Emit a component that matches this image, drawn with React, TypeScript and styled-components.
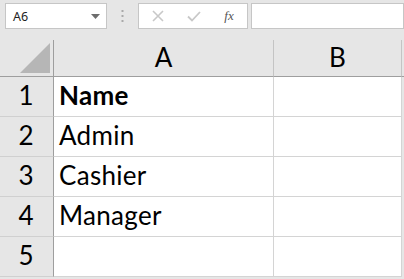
import React from "react";
import styled, { createGlobalStyle } from "styled-components";

const Global = createGlobalStyle`
  html, body { margin: 0; padding: 0; background: #e6e6e6; }
  body { width: 404px; height: 279px; overflow: hidden; }
`;

const Page = styled.div`
  width: 404px;
  height: 279px;
  background: #e6e6e6;
  display: flex;
  flex-direction: column;
`;

const Toolbar = styled.div`
  height: 40px;
  box-sizing: border-box;
  padding: 3px 0 0 5px;
  display: flex;
  align-items: flex-start;
`;

const Box = styled.div<{ $w: number }>`
  width: ${(p) => p.$w}px;
  height: 26px;
  box-sizing: border-box;
  background: #ffffff;
  border: 1px solid #c6c6c6;
  display: flex;
  align-items: center;
  flex: ${(p) => (p.$w === 0 ? "1" : "none")};
`;

const NameText = styled.span`
  font-family: "Noto Sans", "DejaVu Sans", sans-serif;
  font-size: 12.5px;
  color: #222;
  padding-left: 7px;
  flex: 1;
`;

const Caret = styled.svg`
  margin-right: 6px;
`;

const Dots = styled.div`
  width: 31px;
  height: 26px;
  display: flex;
  align-items: center;
  justify-content: center;
`;

const FxButtons = styled.div`
  display: flex;
  align-items: center;
  width: 100%;
  height: 100%;
`;

const FxBtn = styled.div<{ $w: number }>`
  width: ${(p) => p.$w}px;
  height: 100%;
  display: flex;
  align-items: center;
  justify-content: center;
`;

const FxLabel = styled.span`
  font-family: "Liberation Serif", "DejaVu Serif", serif;
  font-style: italic;
  font-size: 13px;
  color: #555;
`;

const Gap = styled.div`
  width: 3px;
`;

const Sheet = styled.div`
  display: grid;
  grid-template-columns: 54px 220px 128px 1fr;
  grid-template-rows: 37px repeat(5, 40px);
`;

const Corner = styled.div`
  background: #e6e6e6;
  border-right: 1px solid #9e9e9e;
  border-bottom: 1px solid #9e9e9e;
  position: relative;
`;

const ColHead = styled.div`
  background: #e6e6e6;
  border-right: 1px solid #c4c4c4;
  border-bottom: 1px solid #9e9e9e;
  display: flex;
  align-items: flex-end;
  justify-content: center;
  padding-bottom: 6px;
  box-sizing: border-box;
  font-family: Lato, "Noto Sans", sans-serif;
  font-size: 26px;
  line-height: 1;
  color: #000;
`;

const Filler = styled.div<{ $head?: boolean }>`
  background: #e6e6e6;
  border-bottom: ${(p) => (p.$head ? "1px solid #9e9e9e" : "none")};
`;

const RowHead = styled.div`
  background: #e6e6e6;
  border-right: 1px solid #9e9e9e;
  border-bottom: 1px solid #d0d0d0;
  display: flex;
  align-items: flex-end;
  justify-content: center;
  padding: 0 1px 8px 0;
  box-sizing: border-box;
  font-family: Lato, "Noto Sans", sans-serif;
  font-size: 26px;
  line-height: 1;
  color: #000;
`;

const Cell = styled.div<{ $bold?: boolean }>`
  background: #fff;
  border-right: 1px solid #d4d4d4;
  border-bottom: 1px solid #d4d4d4;
  display: flex;
  align-items: flex-end;
  padding: 0 0 8px 5px;
  box-sizing: border-box;
  font-family: Lato, "Noto Sans", sans-serif;
  font-size: 26px;
  line-height: 1;
  font-weight: ${(p) => (p.$bold ? 700 : 400)};
  letter-spacing: 0.3px;
  color: #000;
  white-space: nowrap;
`;

const rows: [string, string][] = [
  ["1", "Name"],
  ["2", "Admin"],
  ["3", "Cashier"],
  ["4", "Manager"],
  ["5", ""],
];

export default function App() {
  return (
    <Page>
      <Global />
      <Toolbar>
        <Box $w={102}>
          <NameText>A6</NameText>
          <Caret width="9" height="5" viewBox="0 0 9 5">
            <path d="M0 0 H9 L4.5 5 Z" fill="#6d6d6d" />
          </Caret>
        </Box>
        <Dots>
          <svg width="3" height="12" viewBox="0 0 3 12">
            <rect x="0.5" y="0" width="2" height="2" fill="#a9a9a9" />
            <rect x="0.5" y="5" width="2" height="2" fill="#a9a9a9" />
            <rect x="0.5" y="10" width="2" height="2" fill="#a9a9a9" />
          </svg>
        </Dots>
        <Box $w={110}>
          <FxButtons>
            <FxBtn $w={38}>
              <svg width="12" height="12" viewBox="0 0 12 12">
                <path d="M1 1 L11 11 M11 1 L1 11" stroke="#c8c8c8" strokeWidth="1.6" />
              </svg>
            </FxBtn>
            <FxBtn $w={34}>
              <svg width="14" height="11" viewBox="0 0 14 11">
                <path d="M1 5.5 L5 9.5 L13 1" stroke="#c8c8c8" strokeWidth="1.8" fill="none" />
              </svg>
            </FxBtn>
            <FxBtn $w={36}>
              <FxLabel>fx</FxLabel>
            </FxBtn>
          </FxButtons>
        </Box>
        <Gap />
        <Box $w={0} />
      </Toolbar>
      <Sheet>
        <Corner>
          <svg
            width="54"
            height="37"
            viewBox="0 0 54 37"
            style={{ position: "absolute", left: 0, top: 0 }}
          >
            <path d="M20 33 L50 33 L50 3 Z" fill="#b6b6b6" />
          </svg>
        </Corner>
        <ColHead>A</ColHead>
        <ColHead>B</ColHead>
        <Filler $head />
        {rows.map(([n, v]) => (
          <React.Fragment key={n}>
            <RowHead>{n}</RowHead>
            <Cell $bold={n === "1"}>{v}</Cell>
            <Cell />
            <Filler />
          </React.Fragment>
        ))}
      </Sheet>
    </Page>
  );
}
